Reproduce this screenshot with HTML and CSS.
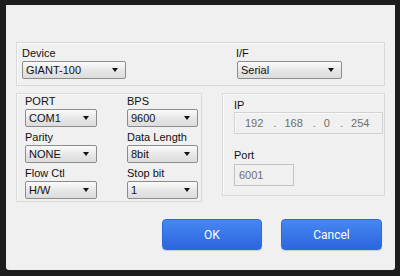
FILE: index.html
```html
<!DOCTYPE html>
<html lang="en">
<head>
    <meta charset="UTF-8">
    <title>Connection Settings</title>
    <link rel="stylesheet" href="styles.css">
</head>
<body>
    <div class="dialog">
        <div class="group top-group">
            <div class="field device">
                <div class="label">Device</div>
                <div class="combo w104">GIANT-100<span class="arrow"></span></div>
            </div>
            <div class="field iface">
                <div class="label">I/F</div>
                <div class="combo w105">Serial<span class="arrow"></span></div>
            </div>
        </div>

        <div class="lower">
            <div class="group serial-group">
                <div class="field">
                    <div class="label">PORT</div>
                    <div class="combo w72">COM1<span class="arrow"></span></div>
                </div>
                <div class="field">
                    <div class="label">BPS</div>
                    <div class="combo w71">9600<span class="arrow"></span></div>
                </div>
                <div class="field">
                    <div class="label">Parity</div>
                    <div class="combo w72">NONE<span class="arrow"></span></div>
                </div>
                <div class="field">
                    <div class="label">Data Length</div>
                    <div class="combo w71">8bit<span class="arrow"></span></div>
                </div>
                <div class="field">
                    <div class="label">Flow Ctl</div>
                    <div class="combo w72">H/W<span class="arrow"></span></div>
                </div>
                <div class="field">
                    <div class="label">Stop bit</div>
                    <div class="combo w71">1<span class="arrow"></span></div>
                </div>
            </div>

            <div class="group net-group">
                <div class="label">IP</div>
                <div class="ip-box">
                    <span class="oct">192</span><span class="dot">.</span>
                    <span class="oct">168</span><span class="dot">.</span>
                    <span class="oct">0</span><span class="dot">.</span>
                    <span class="oct">254</span>
                </div>
                <div class="label port-label">Port</div>
                <div class="port-box">6001</div>
            </div>
        </div>

        <div class="buttons">
            <button class="btn">OK</button>
            <button class="btn">Cancel</button>
        </div>
    </div>
</body>
</html>
```

FILE: styles.css
```css
body { margin: 0; padding: 5px 5px 6px 6px; background: #1d1d1d; font-family: "Liberation Sans", Arial, sans-serif; font-size: 11px; color: #111; }
.dialog { width: 389px; height: 265px; box-sizing: border-box; background: #f0f0f0; padding: 37px 10px 0 10px; border-radius: 0 0 3px 3px; }
.group { border: 1px solid #d9d9d9; box-shadow: inset 1px 1px 0 #fbfbfb; box-sizing: border-box; }
.label { line-height: 13px; height: 13px; }

.top-group { width: 369px; height: 44px; display: flex; padding: 4px 0 0 5px; }
.iface { margin-left: 111px; }
.iface .label { margin-left: -1px; }

.combo { position: relative; height: 18px; box-sizing: border-box; border: 1px solid #8c8c8c; border-radius: 2px; background: linear-gradient(#fbfbfb, #e6e6e6 55%, #dcdcdc); line-height: 16px; padding-left: 3px; margin-top: 1px; }
.arrow { position: absolute; right: 7px; top: 6px; width: 0; height: 0; border-left: 3.5px solid transparent; border-right: 3.5px solid transparent; border-top: 4px solid #111; }
.w104 { width: 104px; }
.w105 { width: 105px; }
.w72 { width: 72px; }
.w71 { width: 71px; }

.lower { display: flex; align-items: flex-start; gap: 20px; margin-top: 7px; }
.serial-group { width: 186px; height: 109px; display: grid; grid-template-columns: 102px 72px; row-gap: 2px; padding: 1px 0 0 8px; }
.net-group { width: 163px; height: 103px; padding: 5px 0 0 11px; }

.ip-box { width: 149px; height: 22px; box-sizing: border-box; margin-top: 0; border: 1px solid #d2d2d2; box-shadow: inset 1px 1px 0 #fafafa; display: flex; align-items: center; color: #6f6f6f; padding-left: 10px; }
.oct { display: inline-block; }
.dot { margin: 0 8px 0 10px; }
.port-label { margin-top: 15px; }
.port-box { width: 60px; height: 22px; box-sizing: border-box; margin-top: 2px; border: 1px solid #c2c2c2; color: #6f6f6f; line-height: 20px; padding-left: 4px; }

.buttons { display: flex; justify-content: flex-end; gap: 19px; margin-top: 17px; padding-right: 3px; }
.btn { width: 100px; height: 31px; border: 1px solid #2f6ad8; border-radius: 4px; background: linear-gradient(#4687f3, #2c66dd); color: #fff; font-family: Roboto, "Liberation Sans", sans-serif; font-size: 12px; box-shadow: 0 1px 1px rgba(0,0,0,0.15); }
.btn + .btn { width: 101px; }
```
